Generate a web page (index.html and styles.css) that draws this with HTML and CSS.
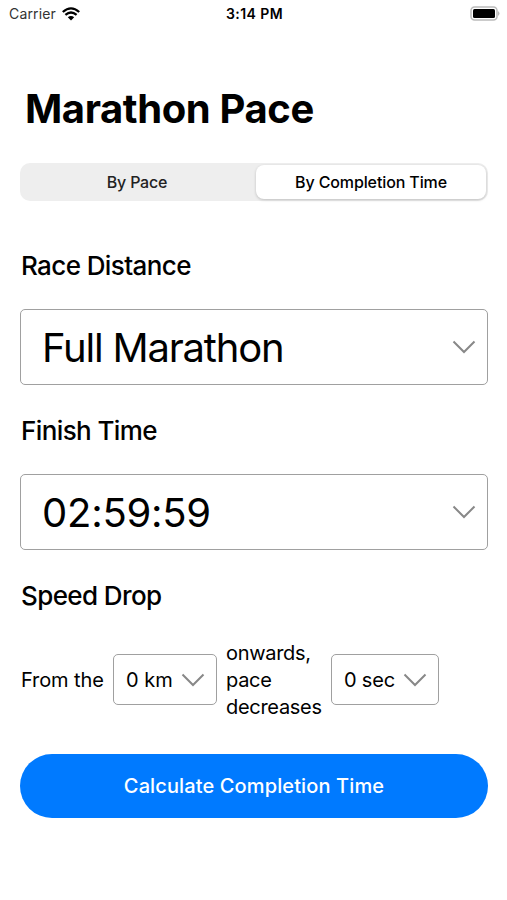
FILE: index.html
```html
<!DOCTYPE html>
<html lang="en">
<head>
<meta charset="utf-8">
<title>Marathon Pace</title>
<link rel="stylesheet" href="styles.css">
</head>
<body>
<header class="status">
  <div class="carrier"><span class="t carrier-name">Carrier</span>
    <svg class="wifi" width="18" height="14" viewBox="0 0 18 14"><path d="M.8 5Q9-2.2 17.2 5M3.4 7.9Q9 3.2 14.6 7.9" fill="none" stroke="#000" stroke-width="2.3"/><path d="M5.8 10.2Q9 7.6 12.2 10.2L9 13.4Z"/></svg>
  </div>
  <span class="t clock">3:14 PM</span>
  <svg class="battery" width="30" height="15" viewBox="0 0 30 15"><rect x="1" y="1" width="26" height="13" rx="3.5" fill="#fff" stroke="#bbb" stroke-width="1.5"/><rect x="3" y="3" width="22" height="9" rx="1.5"/><path d="M28 5Q31 7.5 28 10Z" fill="#bbb"/></svg>
</header>
<main>
  <h1><span class="t title">Marathon Pace</span></h1>
  <div class="tabs"><button class="tab"><span class="t pace">By Pace</span></button><button class="tab active"><span class="t completion">By Completion Time</span></button></div>
  <h2 class="first"><span class="t">Race Distance</span></h2>
  <button class="select"><span class="t marathon">Full Marathon</span><svg class="chev" width="24" height="14" viewBox="0 0 24 14"><path d="M1.5 1.5L12 12L22.5 1.5"/></svg></button>
  <h2><span class="t">Finish Time</span></h2>
  <button class="select"><span class="t time">02:59:59</span><svg class="chev" width="24" height="14" viewBox="0 0 24 14"><path d="M1.5 1.5L12 12L22.5 1.5"/></svg></button>
  <h2><span class="t">Speed Drop</span></h2>
  <div class="drop">
    <span class="from">From the</span>
    <button class="small km"><span>0 km</span><svg class="chev" width="24" height="14" viewBox="0 0 24 14"><path d="M1.5 1.5L12 12L22.5 1.5"/></svg></button>
    <span class="onwards">onwards,<br>pace<br>decreases</span>
    <button class="small sec"><span>0 sec</span><svg class="chev" width="24" height="14" viewBox="0 0 24 14"><path d="M1.5 1.5L12 12L22.5 1.5"/></svg></button>
  </div>
  <button class="submit"><span class="t">Calculate Completion Time</span></button>
</main>
</body>
</html>
```
FILE: styles.css
```css
* { box-sizing: border-box; }
body { margin: 0; background: #fff; color: #000; font-family: Inter, sans-serif; }
button { font: inherit; color: inherit; margin: 0; padding: 0; border: 0; background: none; }
.t { white-space: nowrap; }
.status { height: 27px; padding: 0 7px 0 9px; display: grid; grid-template-columns: 1fr auto 1fr; align-items: center; font-size: 14px; }
.carrier { display: flex; align-items: center; gap: 6px; color: #333; }
.carrier-name { letter-spacing: .15px; }
.clock { font-weight: 600; letter-spacing: .45px; }
.battery { justify-self: end; }
main { padding: 0 19px 0 20px; }
h1 { margin: 55px 0 0 5px; height: 54px; line-height: 54px; font-size: 40px; font-weight: 650; letter-spacing: -.4px; }
.tabs { margin-top: 27px; height: 38px; padding: 2px; display: flex; background: #eee; border-radius: 10px; }
.tab { width: 233px; font-size: 16px; font-weight: 500; letter-spacing: -.2px; color: #222; }
.pace { margin-right: 3px; }
.active { width: 230px; margin-left: 1px; color: #000; background: #fff; border-radius: 8px; box-shadow: 0 1px 3px #0003; }
.completion { letter-spacing: -.12px; }
h2 { margin: 0; height: 89px; line-height: 92px; font-size: 26px; font-weight: 500; letter-spacing: -.6px; padding-left: 1px; }
.first { margin-top: 19px; }
.select { width: 100%; height: 76px; border: 1px solid #a0a0a0; border-radius: 5px; display: flex; align-items: center; justify-content: space-between; padding: 0 11px 0 21px; font-size: 40px; }
.marathon { letter-spacing: -1.2px; }
.time { letter-spacing: -.25px; }
.chev path { fill: none; stroke: #888; stroke-width: 2; }
.drop { display: flex; align-items: center; height: 82px; font-size: 20px; line-height: 27px; }
.small { height: 51px; border: 1px solid #a0a0a0; border-radius: 5px; display: flex; align-items: center; justify-content: space-between; padding: 2px 11px 0 12px; margin-bottom: 2px; }
.from { width: 93px; padding-left: 1px; letter-spacing: -.1px; }
.km { width: 104px; }
.onwards { width: 105px; margin-left: 9px; letter-spacing: -.3px; }
.sec { width: 108px; letter-spacing: -.2px; }
.submit { width: 100%; height: 64px; margin-top: 33px; border-radius: 32px; background: #007aff; color: #fff; font-size: 20px; font-weight: 550; letter-spacing: .12px; padding-bottom: 1px; }
```
